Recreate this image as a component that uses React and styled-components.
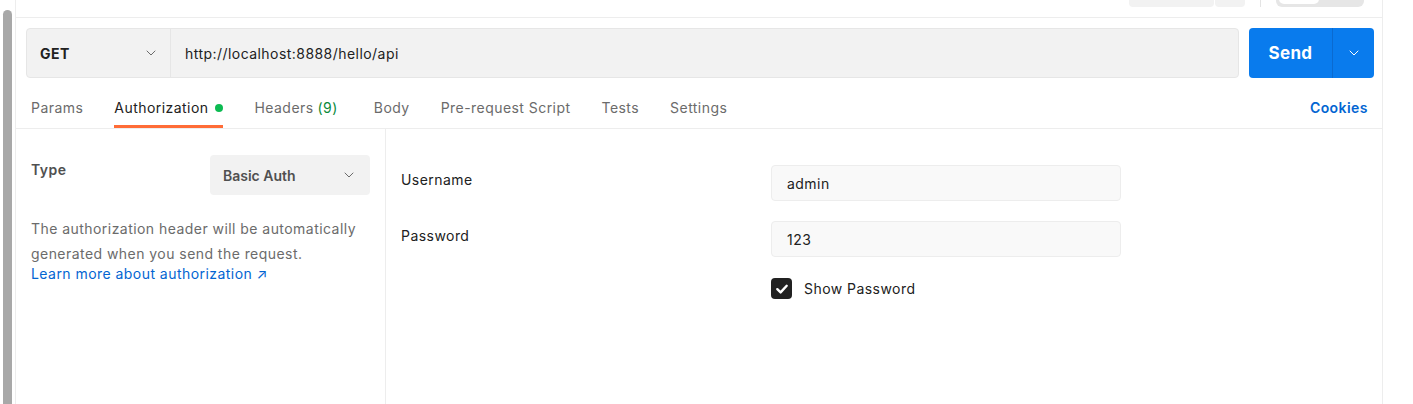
import React from "react";
import styled, { createGlobalStyle } from "styled-components";
import { ChevronDown } from "lucide-react";

const GlobalStyle = createGlobalStyle`
  html, body { margin: 0; padding: 0; background: #ffffff; }
  body {
    font-family: Inter, "Noto Sans", "Liberation Sans", sans-serif;
    color: #212121;
    letter-spacing: 0.45px;
  }
  * { box-sizing: border-box; }
`;

const Page = styled.div`
  display: flex;
  height: 404px;
  overflow: hidden;
  background: #fff;
`;

const Gutter = styled.div`
  width: 15px;
  flex: 0 0 15px;
  padding: 10px 3px 0 3px;
  display: flex;
`;

const Thumb = styled.div`
  width: 9px;
  flex: 1;
  background: #a8a8a8;
  border-radius: 5px 5px 0 0;
`;

const Main = styled.div`
  flex: 0 0 1368px;
  display: flex;
  flex-direction: column;
  border-left: 1px solid #ededed;
  border-right: 1px solid #ededed;
`;

const TopBar = styled.div`
  height: 18px;
  flex: 0 0 18px;
  border-bottom: 1px solid #ededed;
  display: flex;
  justify-content: flex-end;
  align-items: flex-end;
  padding: 0 18px 10px 0;
  overflow: hidden;
`;

const TopGroup = styled.div`
  display: flex;
  gap: 1px;
  height: 30px;
`;

const TopButton = styled.div`
  width: ${(p) => p.$w}px;
  height: 30px;
  background: #f2f2f2;
  border-radius: ${(p) => p.$r};
`;

const TopDivider = styled.div`
  width: 1px;
  height: 30px;
  background: #e4e4e4;
  margin: 0 15px 0 15px;
`;

const Toggle = styled.div`
  width: 88px;
  height: 30px;
  background: #e6e6e6;
  border-radius: 6px;
  padding: 3px;
  display: flex;
  align-items: flex-end;
`;

const Knob = styled.div`
  width: 40px;
  height: 24px;
  background: #ffffff;
  border-radius: 5px;
`;

const RequestRow = styled.div`
  display: flex;
  gap: 10px;
  padding: 10px 8px 0 10px;
`;

const UrlBox = styled.div`
  flex: 1;
  height: 50px;
  display: flex;
  background: #f2f2f2;
  border: 1px solid #e6e6e6;
  border-radius: 4px;
`;

const MethodSelect = styled.div`
  width: 144px;
  flex: 0 0 144px;
  display: flex;
  align-items: center;
  justify-content: space-between;
  padding: 0 11px 0 13px;
  border-right: 1px solid #e6e6e6;
  font-size: 14px;
  font-weight: 700;
  color: #212121;
`;

const UrlText = styled.div`
  flex: 1;
  display: flex;
  align-items: center;
  padding-left: 14px;
  font-size: 14px;
  color: #212121;
`;

const SendButton = styled.div`
  width: 125px;
  height: 50px;
  display: flex;
  background: #097bed;
  border-radius: 4px;
  color: #ffffff;
`;

const SendLabel = styled.div`
  flex: 0 0 84px;
  display: flex;
  align-items: center;
  justify-content: center;
  font-size: 17px;
  font-weight: 700;
  letter-spacing: 0.3px;
  border-right: 1px solid #0a6ad0;
`;

const SendChevron = styled.div`
  flex: 1;
  display: flex;
  align-items: center;
  justify-content: center;
`;

const TabsRow = styled.div`
  display: flex;
  align-items: stretch;
  height: 51px;
  padding: 0 14px 0 15px;
  border-bottom: 1px solid #ededed;
`;

const TabList = styled.div`
  display: flex;
  gap: 31px;
  flex: 1;
`;

const Tab = styled.div`
  display: flex;
  align-items: center;
  gap: 7px;
  height: 50px;
  padding-top: 12px;
  margin-right: ${(p) => (p.$extra ? `${p.$extra}px` : "0")};
  border-bottom: 3px solid ${(p) => (p.$active ? "#ff6c37" : "transparent")};
  font-size: 14px;
  color: ${(p) => (p.$active ? "#212121" : "#6b6b6b")};
  white-space: nowrap;
`;

const Count = styled.span`
  color: #0a8a3a;
  margin-left: 4px;
`;

const Dot = styled.span`
  width: 8px;
  height: 8px;
  border-radius: 50%;
  background: #0cbb52;
  display: inline-block;
`;

const CookiesLink = styled.div`
  display: flex;
  align-items: center;
  padding-top: 8px;
  font-size: 14px;
  font-weight: 600;
  color: #0265d2;
`;

const Body = styled.div`
  flex: 1;
  display: flex;
`;

const LeftPanel = styled.div`
  flex: 0 0 370px;
  border-right: 1px solid #ededed;
  padding: 26px 15px 0 15px;
`;

const TypeRow = styled.div`
  display: flex;
  justify-content: space-between;
  align-items: flex-start;
`;

const TypeLabel = styled.div`
  margin-top: 5px;
  font-size: 14px;
  line-height: 20px;
  font-weight: 600;
  color: #505050;
`;

const AuthSelect = styled.div`
  width: 160px;
  height: 40px;
  display: flex;
  align-items: center;
  justify-content: space-between;
  padding: 0 13px 0 13px;
  background: #f2f2f2;
  border-radius: 4px;
  font-size: 14px;
  font-weight: 600;
  letter-spacing: 0;
  color: #505050;
`;

const Description = styled.p`
  margin: 21px 0 0 0;
  font-size: 14px;
  line-height: 25px;
  color: #6b6b6b;
`;

const LearnLink = styled.div`
  font-size: 14px;
  line-height: 18px;
  margin-top: -1px;
  color: #0265d2;
`;

const RightPanel = styled.div`
  flex: 1;
  padding: 36px 15px 0 15px;
`;

const FormGrid = styled.div`
  display: grid;
  grid-template-columns: 370px 350px;
  row-gap: 20px;
`;

const FieldLabel = styled.div`
  padding-top: 5px;
  font-size: 14px;
  line-height: 20px;
  color: #212121;
`;

const Input = styled.div`
  height: 36px;
  display: flex;
  align-items: center;
  padding: 0 15px;
  background: #f9f9f9;
  border: 1px solid #ededed;
  border-radius: 4px;
  font-size: 14px;
  color: #212121;
`;

const CheckRow = styled.div`
  grid-column: 2;
  display: flex;
  align-items: center;
  gap: 12px;
  margin-top: 1px;
  font-size: 14px;
  color: #212121;
`;

const CheckBox = styled.div`
  width: 21px;
  height: 21px;
  border-radius: 4px;
  background: #212121;
  display: flex;
  align-items: center;
  justify-content: center;
`;

export default function App() {
  const tabs = [
    { label: "Params" },
    { label: "Authorization", active: true, dot: true },
    { label: "Headers", count: "(9)", extra: 5 },
    { label: "Body" },
    { label: "Pre-request Script" },
    { label: "Tests" },
    { label: "Settings" },
  ];
  return (
    <>
      <GlobalStyle />
      <Page>
        <Gutter>
          <Thumb />
        </Gutter>
        <Main>
          <TopBar>
            <TopGroup>
              <TopButton $w={85} $r="0 0 4px 4px" />
              <TopButton $w={30} $r="0 0 4px 4px" />
            </TopGroup>
            <TopDivider />
            <Toggle>
              <Knob />
            </Toggle>
          </TopBar>
          <RequestRow>
            <UrlBox>
              <MethodSelect>
                GET
                <ChevronDown size={16} strokeWidth={1.5} color="#6b6b6b" />
              </MethodSelect>
              <UrlText>http://localhost:8888/hello/api</UrlText>
            </UrlBox>
            <SendButton>
              <SendLabel>Send</SendLabel>
              <SendChevron>
                <ChevronDown size={16} strokeWidth={1.5} color="#ffffff" />
              </SendChevron>
            </SendButton>
          </RequestRow>
          <TabsRow>
            <TabList>
              {tabs.map((t) => (
                <Tab key={t.label} $active={t.active} $extra={t.extra}>
                  <span>
                    {t.label}
                    {t.count && <Count>{t.count}</Count>}
                  </span>
                  {t.dot && <Dot />}
                </Tab>
              ))}
            </TabList>
            <CookiesLink>Cookies</CookiesLink>
          </TabsRow>
          <Body>
            <LeftPanel>
              <TypeRow>
                <TypeLabel>Type</TypeLabel>
                <AuthSelect>
                  Basic Auth
                  <ChevronDown size={16} strokeWidth={1.5} color="#6b6b6b" />
                </AuthSelect>
              </TypeRow>
              <Description>
                The authorization header will be automatically generated when you send the request.
              </Description>
              <LearnLink>Learn more about authorization ↗</LearnLink>
            </LeftPanel>
            <RightPanel>
              <FormGrid>
                <FieldLabel>Username</FieldLabel>
                <Input>admin</Input>
                <FieldLabel>Password</FieldLabel>
                <Input>123</Input>
                <CheckRow>
                  <CheckBox>
                    <svg width="14" height="14" viewBox="0 0 14 14" fill="none">
                      <path d="M2.3 7.2 L5.6 10.4 L11.7 3.8" stroke="#ffffff" strokeWidth="2.4" strokeLinecap="round" strokeLinejoin="round" />
                    </svg>
                  </CheckBox>
                  Show Password
                </CheckRow>
              </FormGrid>
            </RightPanel>
          </Body>
        </Main>
      </Page>
    </>
  );
}
